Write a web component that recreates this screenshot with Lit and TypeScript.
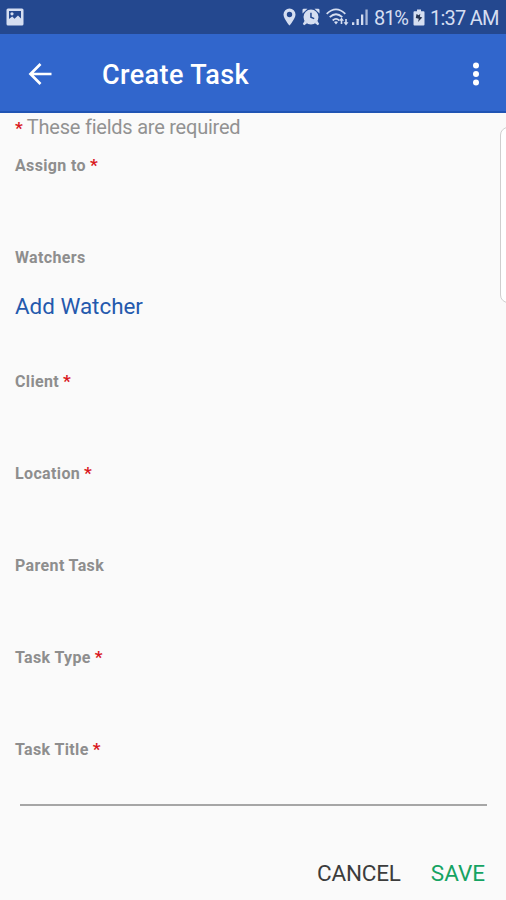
import { LitElement, html, css, nothing } from "lit";
import { customElement, property } from "lit/decorators.js";

@customElement("status-bar")
class StatusBar extends LitElement {
  static styles = css`
    :host { display: flex; align-items: center; justify-content: space-between; height: 34px; box-sizing: border-box; padding: 0 7px 0 6px; background: #24488f; color: #d5def1; }
    svg { display: block; fill: currentColor; flex: none; }
    .right { display: flex; align-items: center; }
    .pin { margin-right: 6px; }
    .alarm { margin-right: 6px; }
    .wifi { margin-right: 3px; }
    .signal { margin-right: 6px; }
    .text { font-size: 20px; line-height: 34px; white-space: nowrap; padding-top: 1px; }
    .percent { width: 34px; margin-right: 5px; letter-spacing: -1.1px; }
    .time { width: 69px; margin-left: 5px; letter-spacing: -0.75px; }
  `;
  render() {
    return html`
      <svg width="18" height="18" viewBox="0 0 18 18">
        <path fill-rule="evenodd" d="M2 .5h14A1.500 1.500 0 0 1 17.500 2v14a1.500 1.500 0 0 1-1.500 1.500H2A1.500 1.500 0 0 1 .5 16V2A1.500 1.500 0 0 1 2 .5zM3 3v8l3.200-2.500 2.300 2.300L12 7.500l3 3V3z"/>
        <circle cx="6" cy="5.800" r="1.600"/>
      </svg>
      <div class="right">
        <svg class="pin" width="13" height="18" viewBox="0 0 13 18">
          <path fill-rule="evenodd" d="M6.500.5a6 6 0 0 0-6 6C.5 10.800 6.500 17.500 6.500 17.500s6-6.700 6-11A6 6 0 0 0 6.500.5zm0 3.300a2.700 2.700 0 1 1 0 5.400 2.700 2.700 0 0 1 0-5.400z"/>
        </svg>
        <svg class="alarm" width="18" height="18" viewBox="0 0 18 18">
          <path fill-rule="evenodd" d="M9 1.500a7.500 7.500 0 1 1 0 15 7.500 7.500 0 0 1 0-15zM8.200 4.800v5l3.700 1.500.6-1.300-2.800-1.200v-4z"/>
          <path d="M.5 5.500V2Q.5.700 1.800.700h3.700zM17.500 5.500V2Q17.500.700 16.200.700h-3.700zM2.800 12.500L.8 16l1.500 1.300 3-2.300zM15.200 12.500l2 3.500-1.500 1.300-3-2.300z"/>
        </svg>
        <svg class="wifi" width="23" height="18" viewBox="0 0 23 18">
          <path fill="none" stroke="currentColor" stroke-width="1.800" d="M.7 5.800Q10-3 19.300 5.800M3.700 9.200q6.300-6 12.600 0M6.700 12.500q3.300-3.200 6.600 0"/>
          <path d="M8 14Q10 12.300 12 14l-2 2.500zM15.500 9.500l2.500 3.200h-1.700v3.300h-1.600v-3.300H13zM20 17.500l-2.500-3.200h1.700V11h1.600v3.300h1.700z"/>
        </svg>
        <svg class="signal" width="16" height="16" viewBox="0 0 16 16">
          <path d="M0 13.300h2.300V16H0zM4.500 10h2.300v6H4.500zM9 5.500h2.300V16H9z"/>
          <path opacity=".75" d="M13.400 0.500h2.300V16h-2.300z"/>
        </svg>
        <span class="text percent">81%</span>
        <svg width="12" height="17" viewBox="0 0 12 17">
          <path fill-rule="evenodd" d="M4 .5h4v1.700h2.500q1 0 1 1v12.300q0 1-1 1h-9q-1 0-1-1V3.200q0-1 1-1H4z"/>
          <path fill="#263452" d="M3.500 5l2.200 1.200L7.300 4.800l-.4 2.900 2.400.8-4.300 4.500.8-3.300-3-.8z"/>
        </svg>
        <span class="text time">1:37 AM</span>
      </div>`;
  }
}

@customElement("form-field")
class FormField extends LitElement {
  @property() label = "";
  @property({ type: Boolean }) required = false;
  static styles = css`
    :host { display: block; height: 92px; box-sizing: border-box; font-weight: 700; }
    :host([tall]) { height: 124px; }
    :host([last]) { height: auto; }
    .label { font-size: 16px; line-height: 20px; color: #8e8e8e; letter-spacing: 0.36px; white-space: nowrap; }
    .star { color: #d9181d; font-size: 17px; line-height: 1; margin-left: -0.4px; }
  `;
  render() {
    return html`<div class="label">${this.label}${this.required ? html` <span class="star">*</span>` : nothing}</div><slot></slot>`;
  }
}

@customElement("app-root")
class AppRoot extends LitElement {
  static styles = css`
    :host { display: flex; flex-direction: column; position: relative; height: 900px; overflow: hidden; background: #fafafa; font-family: Roboto, sans-serif; }
    header { display: flex; align-items: center; height: 79px; box-sizing: border-box; padding: 2px 25px 0 28px; background: #3166cc; border-bottom: 2px solid #2054b4; color: #fff; flex: none; }
    header svg { display: block; flex: none; }
    h1 { flex: 1; margin: 2px 0 0 50px; font-size: 27px; line-height: 34px; font-weight: 500; letter-spacing: 0.4px; }
    main { padding: 0 15px; flex: none; }
    .note { height: 43px; line-height: 29px; font-size: 20px; letter-spacing: -0.23px; color: #929292; white-space: nowrap; }
    .note b { color: #d9181d; font-size: 17px; }
    .link { display: block; margin-top: 24px; font-size: 22.400px; line-height: 28px; font-weight: 400; color: #2459ad; }
    .input { height: 46px; margin: 0 4px 0 5px; border-bottom: 2px solid #a6a6a6; box-sizing: border-box; }
    footer { display: flex; justify-content: flex-end; gap: 30px; padding: 53px 21px 0 0; font-size: 22.500px; line-height: 28px; }
    .cancel { color: #3c3c3c; letter-spacing: -0.2px; }
    .save { color: #15a362; }
    .panel { position: absolute; top: 127px; left: 500px; width: 20px; height: 176px; box-sizing: border-box; border: 1px solid #cfcfcf; border-radius: 8px; background: #fff; }
  `;
  render() {
    return html`
      <status-bar></status-bar>
      <header>
        <svg width="24" height="24" viewBox="0 0 24 24" fill="none" stroke="#fff" stroke-width="2.700"><path d="M23.500 12H2.500M12.500 2L2.500 12l10 10"/></svg>
        <h1>Create Task</h1>
        <svg width="10" height="24" viewBox="0 0 10 24" fill="#fff"><circle cx="5" cy="3.500" r="3"/><circle cx="5" cy="12" r="3"/><circle cx="5" cy="20.500" r="3"/></svg>
      </header>
      <main>
        <div class="note"><b>*</b> These fields are required</div>
        <form-field label="Assign to" required></form-field>
        <form-field label="Watchers" tall><span class="link">Add Watcher</span></form-field>
        <form-field label="Client" required></form-field>
        <form-field label="Location" required></form-field>
        <form-field label="Parent Task"></form-field>
        <form-field label="Task Type" required></form-field>
        <form-field label="Task Title" required last><div class="input"></div></form-field>
      </main>
      <footer><span class="cancel">CANCEL</span><span class="save">SAVE</span></footer>
      <div class="panel"></div>`;
  }
}
